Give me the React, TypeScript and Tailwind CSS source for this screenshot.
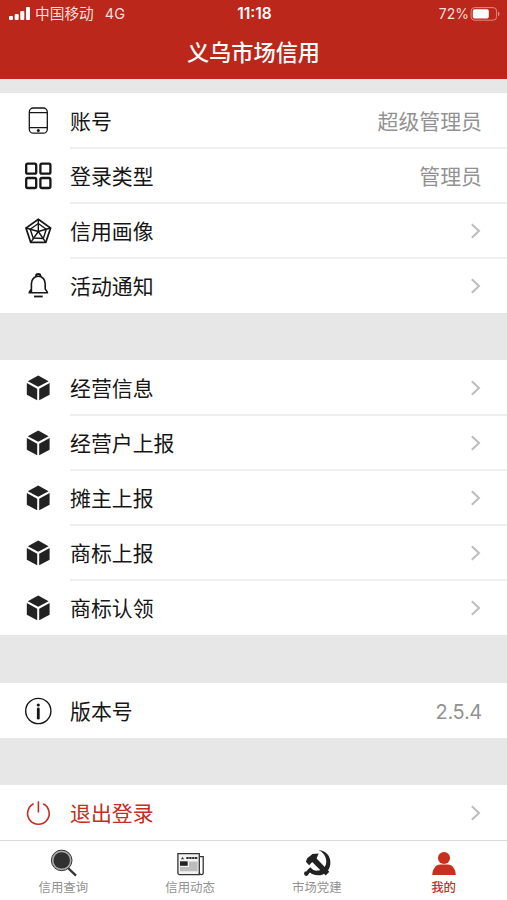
import type { ReactNode } from "react";

type IconName = "phone" | "grid" | "radar" | "bell" | "cube" | "info" | "power";

interface Item {
  icon: IconName;
  label: string;
  value?: string;
  danger?: boolean;
}

const ACCOUNT_ITEMS: Item[] = [
  { icon: "phone", label: "账号", value: "超级管理员" },
  { icon: "grid", label: "登录类型", value: "管理员" },
  { icon: "radar", label: "信用画像" },
  { icon: "bell", label: "活动通知" },
];

const BUSINESS_ITEMS: Item[] = [
  { icon: "cube", label: "经营信息" },
  { icon: "cube", label: "经营户上报" },
  { icon: "cube", label: "摊主上报" },
  { icon: "cube", label: "商标上报" },
  { icon: "cube", label: "商标认领" },
];

export default function App() {
  return (
    <div className="flex h-[900px] w-[507px] flex-col overflow-hidden bg-[#e7e7e7] font-['Inter','Noto_Sans_CJK_SC',sans-serif]">
      <Header />

      <main className="flex flex-1 flex-col pt-3.5">
        <Section items={ACCOUNT_ITEMS} />
        <Section items={BUSINESS_ITEMS} className="mt-[47px]" />
        <Section
          items={[{ icon: "info", label: "版本号", value: "2.5.4" }]}
          className="mt-12"
        />
        <Section
          items={[{ icon: "power", label: "退出登录", danger: true }]}
          className="mt-[47px]"
        />
      </main>

      <TabBar />
    </div>
  );
}

function Header() {
  return (
    <header className="h-[79px] shrink-0 bg-[#bb271a] text-white">
      <div className="grid h-7 grid-cols-3 items-center pr-[7px] pl-[9px] text-[14px] leading-none">
        <div className="flex items-center text-[#f8dfdc]">
          <svg width="21" height="14" viewBox="0 0 21 14" fill="#fff">
            <rect x="0" y="9" width="4" height="4" rx="1" />
            <rect x="5.7" y="7" width="4" height="6" rx="1" />
            <rect x="11.3" y="4" width="4" height="9" rx="1" />
            <rect x="17" y="0" width="4" height="13" rx="1" />
          </svg>
          <span className="ml-[5px] text-[14.7px]">中国移动</span>
          <span className="ml-[11px] text-[14.5px]">4G</span>
        </div>
        <div className="text-center text-[15.5px] font-semibold">11:18</div>
        <div className="flex items-center justify-end text-[#f8dfdc]">
          <span>72%</span>
          <svg className="ml-px" width="30" height="14" viewBox="0 0 30 14">
            <rect x="1.1" y=".6" width="25.5" height="12.6" rx="3.5" fill="none" stroke="#dc8b84" />
            <rect x="2.8" y="2.3" width="16" height="9.3" rx="1.8" fill="#fff" />
            <path d="M28 4.8c2 .6 2 3.8 0 4.4z" fill="#dc8b84" />
          </svg>
        </div>
      </div>
      <h1 className="pt-[10px] text-center text-[22.2px] leading-[30px] font-medium">
        义乌市场信用
      </h1>
    </header>
  );
}

function Section({ items, className = "" }: { items: Item[]; className?: string }) {
  return (
    <section className={`bg-white ${className}`}>
      {items.map((item, i) => (
        <Row key={item.label} item={item} last={i === items.length - 1} />
      ))}
    </section>
  );
}

function Row({ item, last }: { item: Item; last: boolean }) {
  return (
    <div className="flex h-[55px] pl-[23px]">
      <div className="flex w-[30px] items-center justify-center">
        <RowIcon name={item.icon} />
      </div>
      <div className="ml-[17px] flex flex-1 flex-col">
        <div className="flex flex-1 items-center justify-between pr-[25px] text-[20.9px]">
          <span className={`pt-[3px] ${item.danger ? "text-[#c42d20]" : "text-[#161616]"}`}>
            {item.label}
          </span>
          {item.value ? (
            <span
              className={`pt-[3px] text-[#929292] ${item.icon === "info" ? "text-[20px] tracking-[-0.3px]" : ""}`}
            >
              {item.value}
            </span>
          ) : (
            <svg className="mt-0.5 mr-px" width="11" height="16" viewBox="0 0 11 16" fill="none" stroke="#bdbdbd" strokeWidth="2">
              <path d="M1.8 1.2 9 8l-7.2 6.8" />
            </svg>
          )}
        </div>
        <div className={`-mb-px h-0.5 ${last ? "" : "bg-[#efefef]"}`} />
      </div>
    </div>
  );
}

function RowIcon({ name }: { name: IconName }) {
  switch (name) {
    case "phone":
      return (
        <Icon>
          <rect x="6.3" y="2" width="18" height="25.2" rx="4" strokeWidth="1.3" />
          <path d="M6.5 6.7h17.6M6.5 21.7h17.6" strokeWidth="1.3" />
          <circle cx="15.3" cy="24.4" r="1.5" fill="#161616" stroke="none" />
        </Icon>
      );
    case "grid":
      return (
        <Icon>
          <rect x="3.2" y="2.7" width="10" height="10" rx="1.5" strokeWidth="2.3" />
          <rect x="17.4" y="2.7" width="10" height="10" rx="1.5" strokeWidth="2.3" />
          <rect x="3.2" y="17" width="10" height="10" rx="1.5" strokeWidth="2.3" />
          <rect x="17.4" y="17" width="10" height="10" rx="1.5" strokeWidth="2.3" />
        </Icon>
      );
    case "radar":
      return (
        <Icon>
          <path d="M15.3 3.2 27.6 12 22.8 26.3H7.7L3 12z" strokeWidth="1.7" />
          <path d="M15.3 7.5 23.3 13.3 20.3 22.5 10.2 22 7.2 13.2z" strokeWidth="1.4" />
          <path d="M15.3 3.2v12.3L27.6 12M15.3 15.5l7.5 10.8M15.3 15.5 7.7 26.3M15.3 15.5 3 12" strokeWidth="1.4" />
        </Icon>
      );
    case "bell":
      return (
        <Icon>
          <path d="M8.4 21v-8.3c0-4.3 3-7.4 6.9-7.4s6.9 3.1 6.9 7.4v5M8.4 17.7c0 1.5-2.1 2.3-2.1 4.1h18.1c0-1.8-2.2-2.6-2.2-4.1" strokeWidth="1.6" />
          <path d="M13 5.5c0-3.2 4.5-3.2 4.5 0" strokeWidth="2" />
          <path d="M11 25.5h8.7" strokeWidth="1.8" />
        </Icon>
      );
    case "cube":
      return (
        <svg width="30" height="30" viewBox="0 0 30 30" fill="#222">
          <path d="M15.2 2.5 25.6 8.2 15.2 13.7 4.8 8.2z" />
          <path d="M3.8 10 14.2 15.7v11.6L3.8 21.8z" />
          <path d="M26.6 10 16.2 15.7v11.6l10.4-5.5z" />
        </svg>
      );
    case "info":
      return (
        <Icon>
          <circle cx="15.3" cy="15" r="12.6" strokeWidth="1.4" />
          <circle cx="15.3" cy="9" r="1.6" fill="#161616" stroke="none" />
          <path d="M15.3 13v9.2" strokeWidth="2.8" strokeLinecap="round" />
        </Icon>
      );
    case "power":
      return (
        <svg width="30" height="30" viewBox="0 0 30 30" fill="none" stroke="#c42d20" strokeWidth="1.6">
          <path d="M10.6 5.8a10.8 10.8 0 1 0 9.6 0M15.4 3.2v11.2" />
        </svg>
      );
  }
}

function Icon({ children }: { children: ReactNode }) {
  return (
    <svg width="30" height="30" viewBox="0 0 30 30" fill="none" stroke="#161616">
      {children}
    </svg>
  );
}

function TabBar() {
  return (
    <nav className="grid h-[60px] shrink-0 grid-cols-4 border-t border-[#d9d9d9] bg-white">
      <Tab label="信用查询">
        <svg width="30" height="30" viewBox="0 0 30 30">
          <path d="m20 20 8 7.7" stroke="#333" strokeWidth="2.4" />
          <circle cx="13.7" cy="12.4" r="10.3" fill="#aaa" stroke="#333" strokeWidth="1" />
          <circle cx="13.7" cy="12.4" r="8.2" fill="#303030" />
        </svg>
      </Tab>
      <Tab label="信用动态">
        <svg width="30" height="30" viewBox="0 0 30 30" fill="none">
          <path d="M2.9 5.7h21.4v20.9H4.4a1.5 1.5 0 0 1-1.5-1.5z" fill="#f2f2f2" stroke="#333" strokeWidth="1.3" />
          <path d="M24.3 8.6h3.9v16.1c0 2.5-3.9 2.5-3.9 0" stroke="#333" strokeWidth="1.3" />
          <path d="m6 11.2 1.5-2.4L9 11.2z" fill="#333" />
          <path d="M11.3 10h11" stroke="#333" strokeWidth="2" strokeDasharray="2.4 .5" />
          <path d="M14 13.5h8.6v9.8H5v-4.4h9z" fill="#bdbdbd" />
          <path d="M5 13.3h7.7v4.5H5z" fill="#222" />
        </svg>
      </Tab>
      <Tab label="市场党建">
        <svg width="30" height="30" viewBox="0 0 30 30" fill="#222">
          <path d="M16.5 2c7.4.5 11.9 5.8 11.9 12.4 0 7.7-5.4 12.9-12.4 12.9-3.3 0-6-1.1-8-2.8L5.7 22l2.6-2.8c2.4 2.8 4.8 3.8 7.8 3.4 4.8-.6 8.2-4 8.2-9 0-4.8-2.8-9.3-7.8-11.6z" />
          <path d="M3.9 13.7 5.2 10.3 10.5 6l6.1-.5-2 5L27.3 23.8l-3.6 3.6L10.2 14l-3.1 3.2z" />
          <circle cx="4.3" cy="25.6" r="2.3" />
          <path d="m4.5 23 3-2.5 2.5 2.6-3.8 3z" />
        </svg>
      </Tab>
      <Tab label="我的" active>
        <svg width="30" height="30" viewBox="0 0 30 30" fill="#c92f1e">
          <circle cx="15" cy="10" r="6.1" />
          <path d="M3.3 27v-1.3C4 19.7 7.8 16.5 11 16.5h8c3.2 0 7 3.2 7.7 9.2V27z" />
        </svg>
      </Tab>
    </nav>
  );
}

function Tab({ label, active, children }: { label: string; active?: boolean; children: ReactNode }) {
  return (
    <div className="flex flex-col items-center pt-[7px]">
      {children}
      <span
        className={`pt-px text-[12.4px] leading-[18px] ${
          active ? "font-medium text-[#c92f1e]" : "text-[#929292]"
        }`}
      >
        {label}
      </span>
    </div>
  );
}
